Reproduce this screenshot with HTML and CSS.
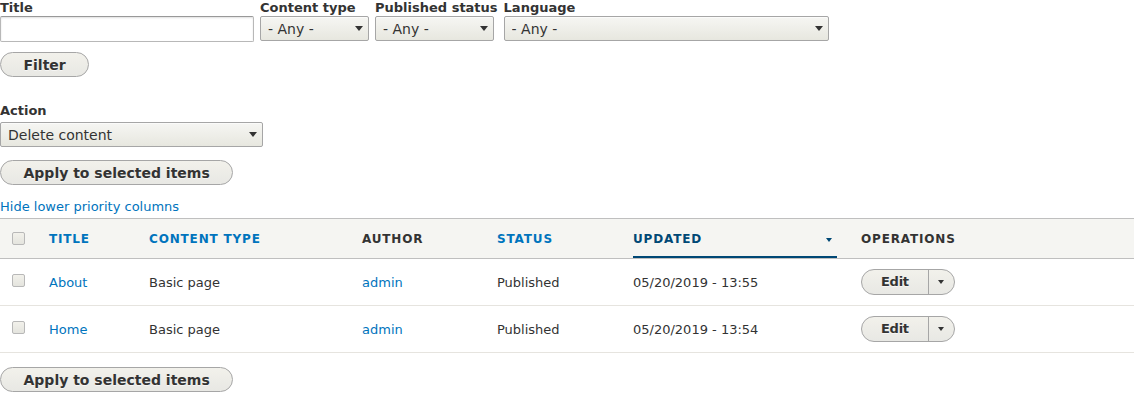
FILE: index.html
```
<html>

<head>
  <meta name="viewport" content="width=device-width, initial-scale=1">
  <link rel="stylesheet" href="styles.css">
</head>

<body>
  <!-- Exposed filters -->
  <form class="views-exposed-form">
    <div class="form-item">
      <label for="edit-title">Title</label>
      <input type="text" id="edit-title" class="form-text">
    </div>
    <div class="form-item">
      <label for="edit-type">Content type</label>
      <span class="select-wrap"><select id="edit-type" class="select-type"><option>- Any -</option></select></span>
    </div>
    <div class="form-item">
      <label for="edit-status">Published status</label>
      <span class="select-wrap"><select id="edit-status" class="select-status"><option>- Any -</option></select></span>
    </div>
    <div class="form-item">
      <label for="edit-langcode">Language</label>
      <span class="select-wrap"><select id="edit-langcode" class="select-lang"><option>- Any -</option></select></span>
    </div>
  </form>
  <div class="form-actions">
    <button class="button">Filter</button>
  </div>

  <!-- Bulk operations -->
  <div class="bulk-form">
    <label for="edit-action">Action</label>
    <span class="select-wrap"><select id="edit-action" class="select-action"><option>Delete content</option></select></span>
    <div class="bulk-actions">
      <button class="button">Apply to selected items</button>
    </div>
  </div>

  <a href="#" class="priority-toggle">Hide lower priority columns</a>

  <table class="views-table">
    <colgroup>
      <col class="col-select">
      <col class="col-title">
      <col class="col-type">
      <col class="col-author">
      <col class="col-status">
      <col class="col-changed">
      <col class="col-ops">
    </colgroup>
    <thead>
      <tr>
        <th><input type="checkbox" class="form-checkbox"></th>
        <th><a href="#">Title</a></th>
        <th><a href="#">Content type</a></th>
        <th>Author</th>
        <th><a href="#">Status</a></th>
        <th class="is-active"><a href="#">Updated<span class="tablesort"></span></a></th>
        <th>Operations</th>
      </tr>
    </thead>
    <tbody>
      <tr>
        <td><input type="checkbox" class="form-checkbox"></td>
        <td><a href="#">About</a></td>
        <td>Basic page</td>
        <td><a href="#">admin</a></td>
        <td>Published</td>
        <td>05/20/2019 - 13:55</td>
        <td>
          <div class="dropbutton">
            <a href="#" class="dropbutton-action">Edit</a>
            <span class="dropbutton-toggle"><span class="arrow"></span></span>
          </div>
        </td>
      </tr>
      <tr>
        <td><input type="checkbox" class="form-checkbox"></td>
        <td><a href="#">Home</a></td>
        <td>Basic page</td>
        <td><a href="#">admin</a></td>
        <td>Published</td>
        <td>05/20/2019 - 13:54</td>
        <td>
          <div class="dropbutton">
            <a href="#" class="dropbutton-action">Edit</a>
            <span class="dropbutton-toggle"><span class="arrow"></span></span>
          </div>
        </td>
      </tr>
    </tbody>
  </table>

  <div class="bulk-actions bottom">
    <button class="button">Apply to selected items</button>
  </div>
</body>

</html>
```

FILE: styles.css
```
body {
  margin: 0;
  font-family: 'DejaVu Sans', Verdana, sans-serif;
  font-size: 13px;
  line-height: 15px;
  color: #222;
}

a {
  color: #0074bd;
  text-decoration: none;
}

label {
  display: block;
  font-weight: bold;
  color: #333;
}

/* filters */
.views-exposed-form {
  display: flex;
  gap: 6px;
  margin: 0;
}

.views-exposed-form label {
  margin-bottom: 1px;
}

.form-text {
  box-sizing: border-box;
  width: 254px;
  height: 26px;
  margin: 0;
  padding: 3px 6px;
  border: 1px solid #b8b8b8;
  border-top-color: #999;
  border-radius: 2px;
  background: #fff;
  box-shadow: inset 0 1px 2px rgba(0, 0, 0, 0.125);
  font: 14px 'DejaVu Sans', sans-serif;
}

.select-wrap {
  position: relative;
  display: block;
  width: fit-content;
}

.select-wrap::after {
  content: '';
  position: absolute;
  right: 6px;
  top: 10px;
  border-left: 4px solid transparent;
  border-right: 4px solid transparent;
  border-top: 5px solid #333;
  pointer-events: none;
}

select {
  appearance: none;
  -webkit-appearance: none;
  box-sizing: border-box;
  display: block;
  height: 25px;
  margin: 0;
  padding: 0 20px 0 7px;
  border: 1px solid #a6a6a6;
  border-radius: 2px;
  background: linear-gradient(#f6f6f3, #e7e7df);
  box-shadow: inset 0 1px 0 rgba(255, 255, 255, 0.6);
  color: #333;
  font: 14px 'DejaVu Sans', sans-serif;
}

.select-type {
  width: 109px;
}

.select-status {
  width: 119px;
}

.select-lang {
  width: 325px;
}

.select-action {
  width: 263px;
}

/* buttons */
.button {
  box-sizing: border-box;
  height: 25px;
  margin: 0;
  padding: 0 22.5px;
  border: 1px solid #a6a6a6;
  border-radius: 20em;
  background: linear-gradient(#f2f1eb, #e8e8e4);
  color: #333;
  font: bold 14px 'DejaVu Sans', sans-serif;
  text-shadow: 0 1px rgba(255, 255, 255, 0.6);
}

.form-actions {
  margin-top: 10px;
}

.bulk-form {
  margin-top: 26px;
}

.bulk-form label {
  margin-bottom: 4px;
}

.bulk-actions {
  margin-top: 13px;
}

.priority-toggle {
  display: inline-block;
  margin-top: 14px;
}

/* table */
.views-table {
  width: 100%;
  margin-top: 4px;
  border-collapse: collapse;
  table-layout: fixed;
  font-size: 13px;
  line-height: 15px;
  color: #333;
}

.col-select { width: 37px; }
.col-title { width: 100px; }
.col-type { width: 213px; }
.col-author { width: 135px; }
.col-status { width: 136px; }
.col-changed { width: 228px; }

th {
  padding: 13px 12px 11px;
  border-top: 1px solid #bfbfbf;
  border-bottom: 1px solid #bfbfbf;
  background: #f5f5f2;
  color: #333;
  font-size: 12px;
  font-weight: bold;
  text-align: left;
  text-transform: uppercase;
  letter-spacing: 0.07em;
}

th a {
  display: block;
}

th.is-active a {
  position: relative;
  margin-bottom: -11px;
  padding-bottom: 9px;
  border-bottom: 2px solid #004875;
  color: #004875;
}

.tablesort {
  position: absolute;
  right: 5px;
  top: 6px;
  border-left: 3.5px solid transparent;
  border-right: 3.5px solid transparent;
  border-top: 4px solid #004875;
}

td {
  padding: 10px 12px;
  border-bottom: 1px solid #e6e4df;
  vertical-align: middle;
}

.form-checkbox {
  appearance: none;
  -webkit-appearance: none;
  display: block;
  width: 13px;
  height: 13px;
  margin: 0;
  border: 1px solid #b8b8b8;
  border-radius: 2px;
  background: linear-gradient(#f2f1eb, #e4e4de);
}

th .form-checkbox {
  margin-top: -3px;
}

td .form-checkbox {
  margin-top: -3px;
}

/* operations */
.dropbutton {
  display: inline-flex;
  box-sizing: border-box;
  height: 26px;
  border: 1px solid #a6a6a6;
  border-radius: 20em;
  background: linear-gradient(#f2f1eb, #e8e8e4);
  font-size: 13px;
  font-weight: bold;
  line-height: 24px;
  letter-spacing: -0.02em;
}

.dropbutton-action {
  padding: 0 19.5px 0 19px;
  color: #333;
  text-shadow: 0 1px rgba(255, 255, 255, 0.6);
}

.dropbutton-toggle {
  display: flex;
  align-items: center;
  justify-content: center;
  width: 25px;
  border-left: 1px solid #a6a6a6;
}

.dropbutton-toggle .arrow {
  margin-left: -2px;
  border-left: 3.5px solid transparent;
  border-right: 3.5px solid transparent;
  border-top: 4px solid #333;
}

.bulk-actions.bottom {
  margin-top: 14px;
}
```
